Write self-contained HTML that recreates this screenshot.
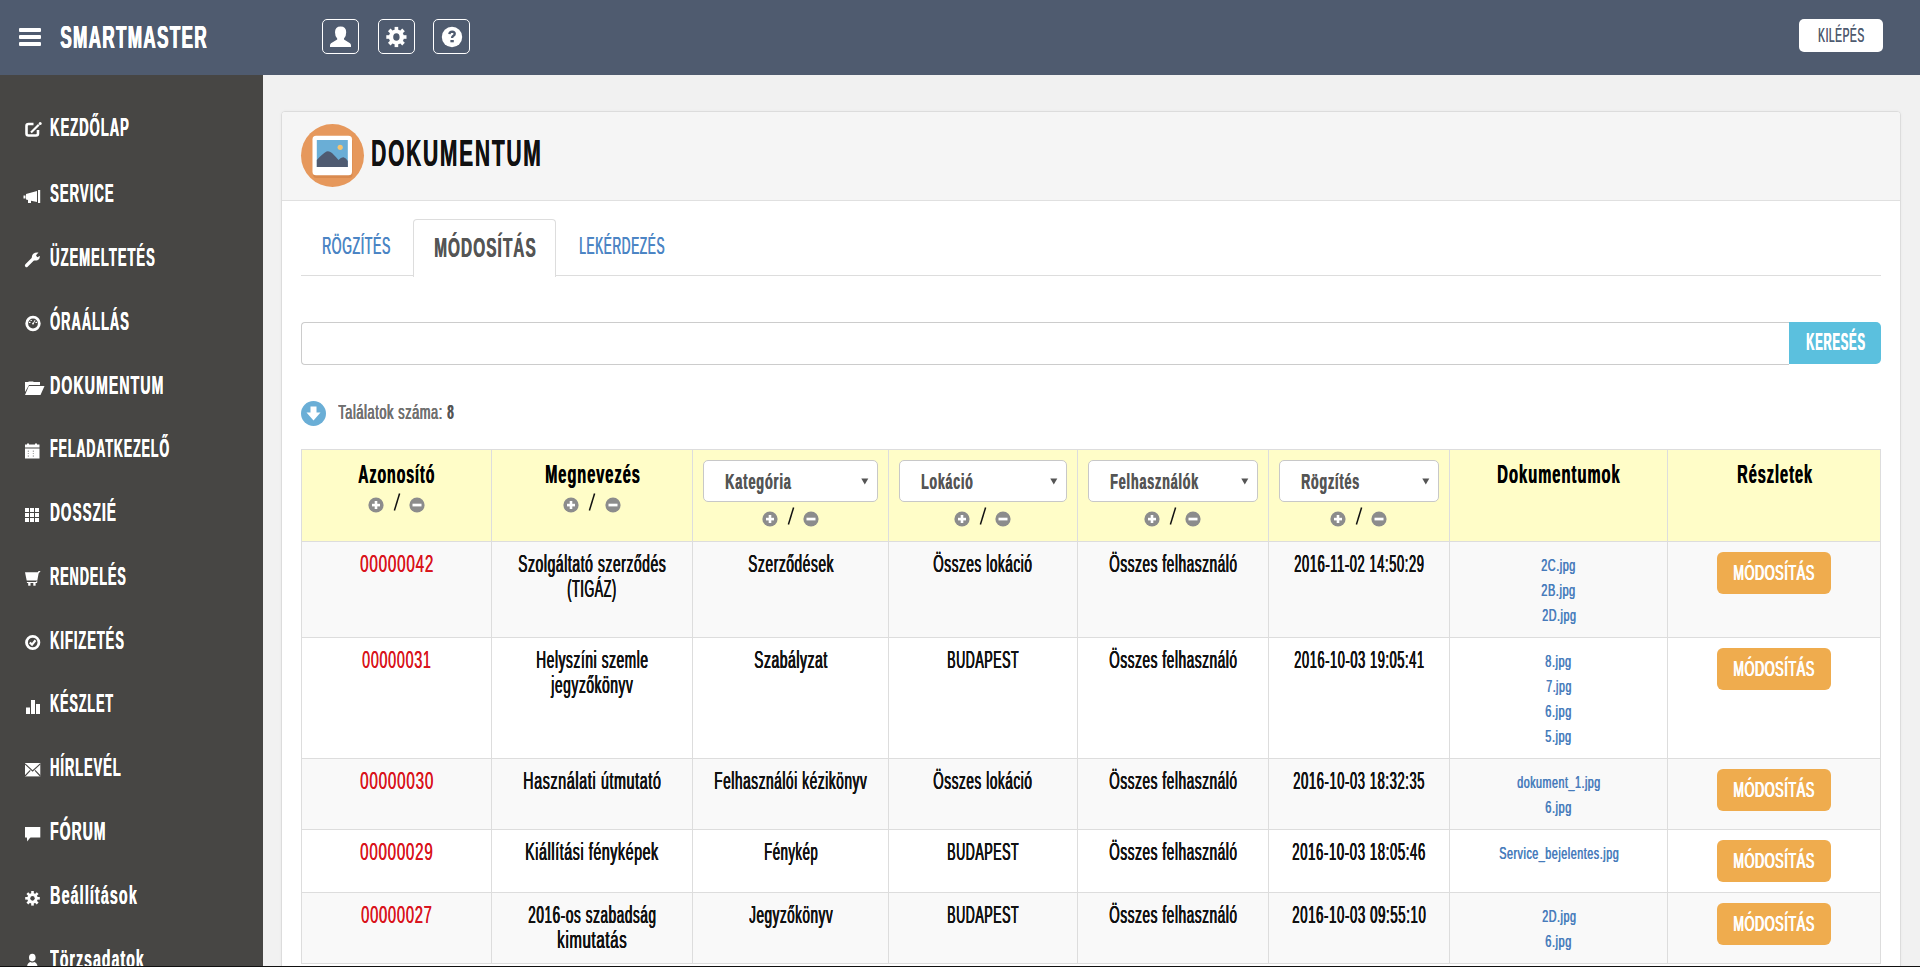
<!DOCTYPE html>
<html><head><meta charset="utf-8"><title>SmartMaster - Dokumentum</title>
<style>
html,body{margin:0;padding:0;}
body{width:1920px;height:967px;overflow:hidden;position:relative;background:#f1f1f1;font-family:"Liberation Sans",sans-serif;}
.r{position:absolute;box-sizing:content-box;}
.t{position:absolute;white-space:nowrap;transform-origin:0 0;font-family:"Liberation Sans",sans-serif;}
svg.r{overflow:visible}
</style></head><body>
<div class="r" style="left:0;top:0;width:1920px;height:75px;background:#4f5b6f"></div>
<div class="r" style="left:19px;top:28px;width:22px;height:4px;background:#fff;border-radius:1px"></div>
<div class="r" style="left:19px;top:35px;width:22px;height:4px;background:#fff;border-radius:1px"></div>
<div class="r" style="left:19px;top:42px;width:22px;height:4px;background:#fff;border-radius:1px"></div>
<span class="t" style="left:60.00px;top:20.93px;font-size:31.977px;line-height:31.977px;letter-spacing:2.558px;color:#fff;font-weight:bold;transform:scaleX(0.5334);text-shadow:0.66px 0 0 #fff,1.31px 0 0 #fff;">SMARTMASTER</span>
<div class="r" style="left:322px;top:19px;width:35px;height:33px;border:1px solid #fff;border-radius:5px"></div>
<div class="r" style="left:378px;top:19px;width:35px;height:33px;border:1px solid #fff;border-radius:5px"></div>
<div class="r" style="left:433px;top:19px;width:35px;height:33px;border:1px solid #fff;border-radius:5px"></div>
<svg class="r" style="left:322px;top:19px" width="37" height="35" viewBox="0 0 37 35"><path d="M13 13.2 Q13 7.6 18.6 7.6 Q24.2 7.6 24.2 13.2 Q24.2 17.5 22 19.6 L22 20.4 L28 24.2 Q29 25 29 26.5 L29 28.1 L8 28.1 L8 26.5 Q8 25 9 24.2 L15.2 20.4 L15.2 19.6 Q13 17.5 13 13.2 Z" fill="#fff"/></svg>
<svg class="r" style="left:378px;top:19px" width="37" height="35" viewBox="0 0 37 35"><circle cx="18.40" cy="18.00" r="7.60" fill="#fff"/><rect x="16.60" y="7.90" width="3.60" height="10.10" fill="#fff" transform="rotate(0.0 18.40 18.00)"/><rect x="16.60" y="7.90" width="3.60" height="10.10" fill="#fff" transform="rotate(45.0 18.40 18.00)"/><rect x="16.60" y="7.90" width="3.60" height="10.10" fill="#fff" transform="rotate(90.0 18.40 18.00)"/><rect x="16.60" y="7.90" width="3.60" height="10.10" fill="#fff" transform="rotate(135.0 18.40 18.00)"/><rect x="16.60" y="7.90" width="3.60" height="10.10" fill="#fff" transform="rotate(180.0 18.40 18.00)"/><rect x="16.60" y="7.90" width="3.60" height="10.10" fill="#fff" transform="rotate(225.0 18.40 18.00)"/><rect x="16.60" y="7.90" width="3.60" height="10.10" fill="#fff" transform="rotate(270.0 18.40 18.00)"/><rect x="16.60" y="7.90" width="3.60" height="10.10" fill="#fff" transform="rotate(315.0 18.40 18.00)"/><ellipse cx="18.40" cy="18.00" rx="3.20" ry="3.80" fill="#4f5b6f"/></svg>
<svg class="r" style="left:433px;top:19px" width="37" height="35" viewBox="0 0 37 35"><circle cx="19" cy="18" r="10.2" fill="#fff"/><path d="M16.4 15.2 Q16.6 12.6 19.2 12.6 Q21.7 12.7 21.7 14.8 Q21.6 16.2 20.1 17 Q19.1 17.6 19.1 19" fill="none" stroke="#4f5b6f" stroke-width="2.4"/><rect x="17.4" y="21" width="3.4" height="2.3" fill="#4f5b6f"/></svg>
<div class="r" style="left:1799px;top:19px;width:84px;height:33px;background:#fff;border-radius:5px"></div>
<span class="t" style="left:1817.60px;top:24.77px;font-size:20.349px;line-height:20.349px;letter-spacing:1.017px;color:#4f5b6f;font-weight:normal;transform:scaleX(0.5069);text-shadow:0.59px 0 0 #4f5b6f;">KILÉPÉS</span>
<div class="r" style="left:0;top:75px;width:263px;height:892px;background:#474644"></div>
<span class="t" style="left:50.00px;top:113.85px;font-size:26.163px;line-height:26.163px;letter-spacing:2.093px;color:#fff;font-weight:bold;transform:scaleX(0.4964);text-shadow:0.60px 0 0 #fff;">KEZDŐLAP</span>
<span class="t" style="left:50.00px;top:179.85px;font-size:26.163px;line-height:26.163px;letter-spacing:2.093px;color:#fff;font-weight:bold;transform:scaleX(0.5002);text-shadow:0.60px 0 0 #fff;">SERVICE</span>
<span class="t" style="left:50.00px;top:243.85px;font-size:26.163px;line-height:26.163px;letter-spacing:2.093px;color:#fff;font-weight:bold;transform:scaleX(0.4965);text-shadow:0.60px 0 0 #fff;">ÜZEMELTETÉS</span>
<span class="t" style="left:50.00px;top:307.85px;font-size:26.163px;line-height:26.163px;letter-spacing:2.093px;color:#fff;font-weight:bold;transform:scaleX(0.4919);text-shadow:0.61px 0 0 #fff;">ÓRAÁLLÁS</span>
<span class="t" style="left:50.00px;top:371.85px;font-size:26.163px;line-height:26.163px;letter-spacing:2.093px;color:#fff;font-weight:bold;transform:scaleX(0.5373);text-shadow:0.56px 0 0 #fff;">DOKUMENTUM</span>
<span class="t" style="left:50.00px;top:434.85px;font-size:26.163px;line-height:26.163px;letter-spacing:2.093px;color:#fff;font-weight:bold;transform:scaleX(0.4734);text-shadow:0.63px 0 0 #fff;">FELADATKEZELŐ</span>
<span class="t" style="left:50.00px;top:498.85px;font-size:26.163px;line-height:26.163px;letter-spacing:2.093px;color:#fff;font-weight:bold;transform:scaleX(0.5157);text-shadow:0.58px 0 0 #fff;">DOSSZIÉ</span>
<span class="t" style="left:50.00px;top:562.85px;font-size:26.163px;line-height:26.163px;letter-spacing:2.093px;color:#fff;font-weight:bold;transform:scaleX(0.4818);text-shadow:0.62px 0 0 #fff;">RENDELÉS</span>
<span class="t" style="left:50.00px;top:626.85px;font-size:26.163px;line-height:26.163px;letter-spacing:2.093px;color:#fff;font-weight:bold;transform:scaleX(0.4898);text-shadow:0.61px 0 0 #fff;">KIFIZETÉS</span>
<span class="t" style="left:50.00px;top:689.85px;font-size:26.163px;line-height:26.163px;letter-spacing:2.093px;color:#fff;font-weight:bold;transform:scaleX(0.4774);text-shadow:0.63px 0 0 #fff;">KÉSZLET</span>
<span class="t" style="left:50.00px;top:753.85px;font-size:26.163px;line-height:26.163px;letter-spacing:2.093px;color:#fff;font-weight:bold;transform:scaleX(0.4895);text-shadow:0.61px 0 0 #fff;">HÍRLEVÉL</span>
<span class="t" style="left:50.00px;top:817.85px;font-size:26.163px;line-height:26.163px;letter-spacing:2.093px;color:#fff;font-weight:bold;transform:scaleX(0.5303);text-shadow:0.57px 0 0 #fff;">FÓRUM</span>
<span class="t" style="left:50.00px;top:881.85px;font-size:26.163px;line-height:26.163px;letter-spacing:2.093px;color:#fff;font-weight:bold;transform:scaleX(0.5443);text-shadow:0.55px 0 0 #fff;">Beállítások</span>
<span class="t" style="left:50.00px;top:945.85px;font-size:26.163px;line-height:26.163px;letter-spacing:2.093px;color:#fff;font-weight:bold;transform:scaleX(0.5346);text-shadow:0.56px 0 0 #fff;">Törzsadatok</span>
<svg class="r" style="left:24px;top:121px" width="18" height="17" viewBox="0 0 18 17"><path d="M9.5 3 H4.5 Q2.5 3 2.5 5 V12.5 Q2.5 14.5 4.5 14.5 H12 Q14 14.5 14 12.5 V9" fill="none" stroke="#fff" stroke-width="2.6"/><path d="M7 11.5 L14.8 3.8" stroke="#fff" stroke-width="2.2"/><circle cx="16.2" cy="2.6" r="1.5" fill="#fff"/></svg>
<svg class="r" style="left:23px;top:189px" width="19" height="16" viewBox="0 0 19 16"><path d="M3 5 L14 2 V13 L8 11.8 V14 H5 V11 L3 10.6 Z" fill="#fff"/><rect x="15" y="1" width="2.2" height="13" fill="#fff"/><rect x="0.5" y="6.5" width="2" height="3" fill="#fff"/></svg>
<svg class="r" style="left:24px;top:251px" width="18" height="17" viewBox="0 0 18 17"><path d="M2.5 14.5 L9.5 7.5" stroke="#fff" stroke-width="3.2" stroke-linecap="round"/><path d="M8 8 Q7 3.5 11 1.8 Q13 1.2 14.5 1.6 L12 4.2 L13.2 6.2 L15.8 5 Q16.2 7.8 13.5 9.2 Q11 10 9.5 9.2 Z" fill="#fff"/></svg>
<svg class="r" style="left:24px;top:315px" width="18" height="17" viewBox="0 0 18 17"><circle cx="9" cy="8.5" r="6.3" fill="none" stroke="#fff" stroke-width="2.8"/><rect x="5" y="6.8" width="1.5" height="1.2" fill="#fff"/><rect x="11.5" y="6.8" width="1.5" height="1.2" fill="#fff"/><rect x="8.2" y="7.8" width="1.6" height="1.6" fill="#fff"/><rect x="6.5" y="5" width="1.3" height="1" fill="#fff"/><path d="M9 9 L11 5.2" stroke="#fff" stroke-width="1"/></svg>
<svg class="r" style="left:24px;top:380px" width="21" height="17" viewBox="0 0 21 17"><path d="M1 2 H4 L5 1.5 H9 L9.8 2 H16 V5 H5 L1 12 Z" fill="#fff"/><path d="M4.8 6 H20.5 L16.5 15 H1 Z" fill="#fff"/></svg>
<svg class="r" style="left:24px;top:443px" width="17" height="17" viewBox="0 0 17 17"><rect x="1" y="1.5" width="14.5" height="3" fill="#fff"/><rect x="3" y="0.5" width="2" height="2" fill="#fff"/><rect x="11" y="0.5" width="2" height="2" fill="#fff"/><rect x="1" y="5.5" width="14.5" height="10" fill="#fff"/><g fill="#999"><rect x="3.8" y="7.5" width="1" height="1.5"/><rect x="8.8" y="7.5" width="1" height="1.5"/><rect x="3.8" y="10" width="1" height="1"/><rect x="8.8" y="10" width="1" height="1"/><rect x="3.8" y="12.3" width="1" height="1.5"/><rect x="8.8" y="12.3" width="1" height="1.5"/></g></svg>
<svg class="r" style="left:24px;top:507px" width="17" height="17" viewBox="0 0 17 17"><g fill="#fff"><rect x="1.0" y="1.0" width="4" height="4"/><rect x="1.0" y="6.0" width="4" height="4"/><rect x="1.0" y="11.0" width="4" height="4"/><rect x="6.0" y="1.0" width="4" height="4"/><rect x="6.0" y="6.0" width="4" height="4"/><rect x="6.0" y="11.0" width="4" height="4"/><rect x="11.0" y="1.0" width="4" height="4"/><rect x="11.0" y="6.0" width="4" height="4"/><rect x="11.0" y="11.0" width="4" height="4"/></g></svg>
<svg class="r" style="left:24px;top:570px" width="18" height="17" viewBox="0 0 18 17"><g fill="#fff"><path d="M1 2.2 H13.8 L14.6 0.9 H16.6 L14.6 3.4 L13.3 10.6 H2.7 Z"/><path d="M13.3 10.4 L13.1 13 H2.9 V11.9 H12 Z"/><rect x="4.2" y="13" width="2.3" height="2.7"/><rect x="9.3" y="13" width="2.3" height="2.7"/></g></svg>
<svg class="r" style="left:24px;top:634px" width="18" height="17" viewBox="0 0 18 17"><circle cx="8.7" cy="8.5" r="6.2" fill="none" stroke="#fff" stroke-width="2.8"/><path d="M5.8 8.5 L8 10.6 L11.5 6.3" fill="none" stroke="#fff" stroke-width="2.2"/></svg>
<svg class="r" style="left:25px;top:699px" width="17" height="17" viewBox="0 0 17 17"><g fill="#fff"><rect x="1" y="8.5" width="4" height="6.5"/><rect x="6" y="1" width="4" height="14"/><rect x="11" y="5" width="4" height="10"/></g></svg>
<svg class="r" style="left:24px;top:762px" width="17" height="16" viewBox="0 0 17 16"><rect x="1" y="1" width="15.3" height="13.4" fill="#fff"/><path d="M1 1.8 L8.6 9 L16.3 1.8 M1 14 L6.3 8.4 M16.3 14 L11 8.4" fill="none" stroke="#474644" stroke-width="1.1"/></svg>
<svg class="r" style="left:24px;top:826px" width="17" height="17" viewBox="0 0 17 17"><rect x="1" y="1" width="15.3" height="10.5" fill="#fff"/><path d="M2.8 11 H6.6 L3.3 15.5 Z" fill="#fff"/></svg>
<svg class="r" style="left:24px;top:890px" width="17" height="17" viewBox="0 0 17 17"><circle cx="8.50" cy="8.30" r="5.20" fill="#fff"/><rect x="7.20" y="1.00" width="2.60" height="7.30" fill="#fff" transform="rotate(0.0 8.50 8.30)"/><rect x="7.20" y="1.00" width="2.60" height="7.30" fill="#fff" transform="rotate(45.0 8.50 8.30)"/><rect x="7.20" y="1.00" width="2.60" height="7.30" fill="#fff" transform="rotate(90.0 8.50 8.30)"/><rect x="7.20" y="1.00" width="2.60" height="7.30" fill="#fff" transform="rotate(135.0 8.50 8.30)"/><rect x="7.20" y="1.00" width="2.60" height="7.30" fill="#fff" transform="rotate(180.0 8.50 8.30)"/><rect x="7.20" y="1.00" width="2.60" height="7.30" fill="#fff" transform="rotate(225.0 8.50 8.30)"/><rect x="7.20" y="1.00" width="2.60" height="7.30" fill="#fff" transform="rotate(270.0 8.50 8.30)"/><rect x="7.20" y="1.00" width="2.60" height="7.30" fill="#fff" transform="rotate(315.0 8.50 8.30)"/><ellipse cx="8.50" cy="8.30" rx="2.20" ry="2.40" fill="#474644"/></svg>
<svg class="r" style="left:26px;top:953px" width="13" height="14" viewBox="0 0 13 14"><ellipse cx="6.3" cy="4.6" rx="3.3" ry="3.8" fill="#fff"/><path d="M1 13.5 Q1.5 9.5 4.5 9 Q6.3 10.2 8.1 9 Q11 9.5 11.6 13.5 Z" fill="#fff"/></svg>
<div class="r" style="left:263px;top:75px;width:1657px;height:892px;background:#f1f1f1"></div>
<div class="r" style="left:281px;top:111px;width:1618px;height:900px;background:#fff;border:1px solid #dcdcdc;border-radius:4px;box-shadow:0 0 3px rgba(0,0,0,0.04)"></div>
<div class="r" style="left:282px;top:112px;width:1618px;height:88px;background:#f5f5f5;border-radius:3px 3px 0 0"></div>
<div class="r" style="left:282px;top:200px;width:1618px;height:1px;background:#e0e0e0"></div>
<svg class="r" style="left:300px;top:123px" width="66" height="66" viewBox="0 0 66 66"><circle cx="32.5" cy="32.5" r="31.5" fill="#e6985c"/><rect x="13" y="15.5" width="39.5" height="39.5" rx="3.5" fill="#d98a4f"/><rect x="12.5" y="12.8" width="39.5" height="39.5" rx="3.5" fill="#fff"/><rect x="16.8" y="17" width="31" height="27" fill="#6aaed6"/><path d="M16.8 37 Q22 31 26.5 28.5 Q29 27.5 32 30 Q36 34 38.5 37 Q41 34 43.5 34.2 Q46 34.8 47.8 38 V44 H16.8 Z" fill="#4f5b71"/><circle cx="40.2" cy="24.3" r="2.6" fill="#f6c46f"/></svg>
<span class="t" style="left:371.00px;top:135.13px;font-size:37.064px;line-height:37.064px;letter-spacing:2.965px;color:#111;font-weight:bold;transform:scaleX(0.5686);text-shadow:0.53px 0 0 #111;">DOKUMENTUM</span>
<div class="r" style="left:301px;top:275px;width:1580px;height:1px;background:#ddd"></div>
<div class="r" style="left:413px;top:219px;width:141px;height:57px;background:#fff;border:1px solid #ddd;border-bottom:none;border-radius:4px 4px 0 0"></div>
<span class="t" style="left:321.70px;top:233.68px;font-size:24.709px;line-height:24.709px;letter-spacing:1.235px;color:#4a84c4;font-weight:normal;transform:scaleX(0.5046);text-shadow:0.99px 0 0 #4a84c4;">RÖGZÍTÉS</span>
<span class="t" style="left:433.90px;top:234.42px;font-size:27.616px;line-height:27.616px;letter-spacing:1.933px;color:#555;font-weight:bold;transform:scaleX(0.5556);text-shadow:0.90px 0 0 #555;">MÓDOSÍTÁS</span>
<span class="t" style="left:578.80px;top:233.68px;font-size:24.709px;line-height:24.709px;letter-spacing:1.235px;color:#4a84c4;font-weight:normal;transform:scaleX(0.4887);text-shadow:1.02px 0 0 #4a84c4;">LEKÉRDEZÉS</span>
<div class="r" style="left:301px;top:322px;width:1487px;height:41px;background:#fff;border:1px solid #ccc;border-right:none;border-radius:4px 0 0 4px"></div>
<div class="r" style="left:1789px;top:322px;width:92px;height:42px;background:#5bc0de;border-radius:0 5px 5px 0"></div>
<span class="t" style="left:1805.90px;top:330.08px;font-size:24.709px;line-height:24.709px;letter-spacing:1.730px;color:#fff;font-weight:bold;transform:scaleX(0.4569);text-shadow:1.09px 0 0 #fff;">KERESÉS</span>
<svg class="r" style="left:300px;top:400px" width="27" height="27" viewBox="0 0 27 27"><circle cx="13.5" cy="13.5" r="12.5" fill="#6aaed6"/><path d="M10.5 6.5 H16.5 V12.5 H20.5 L13.5 20.5 L6.5 12.5 H10.5 Z" fill="#fff"/></svg>
<span class="t" style="left:338.40px;top:401.82px;font-size:20.058px;line-height:20.058px;letter-spacing:1.003px;color:#707070;font-weight:normal;transform:scaleX(0.6325);text-shadow:0.47px 0 0 #707070,0.95px 0 0 #707070;">Találatok száma:</span>
<span class="t" style="left:447.00px;top:401.82px;font-size:20.058px;line-height:20.058px;letter-spacing:1.404px;color:#555;font-weight:bold;transform:scaleX(0.5828);text-shadow:0.86px 0 0 #555;">8</span>
<div class="r" style="left:301px;top:449px;width:1580px;height:92px;background:#fffdc8"></div>
<div class="r" style="left:301px;top:541px;width:1580px;height:96px;background:#f9f9f9"></div>
<div class="r" style="left:301px;top:637px;width:1580px;height:121px;background:#fff"></div>
<div class="r" style="left:301px;top:758px;width:1580px;height:71px;background:#f9f9f9"></div>
<div class="r" style="left:301px;top:829px;width:1580px;height:63px;background:#fff"></div>
<div class="r" style="left:301px;top:892px;width:1580px;height:71px;background:#f9f9f9"></div>
<div class="r" style="left:301px;top:449px;width:1580px;height:1px;background:#dddddd"></div>
<div class="r" style="left:301px;top:541px;width:1580px;height:1px;background:#dddddd"></div>
<div class="r" style="left:301px;top:637px;width:1580px;height:1px;background:#dddddd"></div>
<div class="r" style="left:301px;top:758px;width:1580px;height:1px;background:#dddddd"></div>
<div class="r" style="left:301px;top:829px;width:1580px;height:1px;background:#dddddd"></div>
<div class="r" style="left:301px;top:892px;width:1580px;height:1px;background:#dddddd"></div>
<div class="r" style="left:301px;top:963px;width:1580px;height:1px;background:#dddddd"></div>
<div class="r" style="left:301px;top:449px;width:1px;height:515px;background:#dddddd"></div>
<div class="r" style="left:491px;top:449px;width:1px;height:515px;background:#dddddd"></div>
<div class="r" style="left:692px;top:449px;width:1px;height:515px;background:#dddddd"></div>
<div class="r" style="left:888px;top:449px;width:1px;height:515px;background:#dddddd"></div>
<div class="r" style="left:1077px;top:449px;width:1px;height:515px;background:#dddddd"></div>
<div class="r" style="left:1268px;top:449px;width:1px;height:515px;background:#dddddd"></div>
<div class="r" style="left:1449px;top:449px;width:1px;height:515px;background:#dddddd"></div>
<div class="r" style="left:1667px;top:449px;width:1px;height:515px;background:#dddddd"></div>
<div class="r" style="left:1880px;top:449px;width:1px;height:515px;background:#dddddd"></div>
<span class="t" style="left:358.20px;top:460.85px;font-size:26.163px;line-height:26.163px;letter-spacing:1.831px;color:#000;font-weight:bold;transform:scaleX(0.5394);text-shadow:0.93px 0 0 #000;">Azonosító</span>
<svg class="r" style="left:368.0px;top:496.8px" width="16" height="16" viewBox="0 0 16 16"><circle cx="8" cy="8" r="7.6" fill="#8c8c8c"/><rect x="4" y="6.8" width="8" height="2.6" fill="#fff"/><rect x="6.7" y="4" width="2.6" height="8" fill="#fff"/></svg><svg class="r" style="left:409.0px;top:496.8px" width="16" height="16" viewBox="0 0 16 16"><circle cx="8" cy="8" r="7.6" fill="#8c8c8c"/><rect x="3.5" y="6.7" width="9" height="2.7" fill="#fff"/></svg><svg class="r" style="left:392.0px;top:491.8px" width="10" height="20" viewBox="0 0 10 20"><path d="M7.6 1.5 L2.4 18.5" stroke="#111" stroke-width="1.5"/></svg>
<span class="t" style="left:544.90px;top:460.85px;font-size:26.163px;line-height:26.163px;letter-spacing:1.831px;color:#000;font-weight:bold;transform:scaleX(0.5544);text-shadow:0.90px 0 0 #000;">Megnevezés</span>
<svg class="r" style="left:563.4px;top:496.8px" width="16" height="16" viewBox="0 0 16 16"><circle cx="8" cy="8" r="7.6" fill="#8c8c8c"/><rect x="4" y="6.8" width="8" height="2.6" fill="#fff"/><rect x="6.7" y="4" width="2.6" height="8" fill="#fff"/></svg><svg class="r" style="left:604.5px;top:496.8px" width="16" height="16" viewBox="0 0 16 16"><circle cx="8" cy="8" r="7.6" fill="#8c8c8c"/><rect x="3.5" y="6.7" width="9" height="2.7" fill="#fff"/></svg><svg class="r" style="left:587.3px;top:491.8px" width="10" height="20" viewBox="0 0 10 20"><path d="M7.6 1.5 L2.4 18.5" stroke="#111" stroke-width="1.5"/></svg>
<span class="t" style="left:1497.30px;top:461.52px;font-size:25.727px;line-height:25.727px;letter-spacing:1.801px;color:#000;font-weight:bold;transform:scaleX(0.5723);text-shadow:0.87px 0 0 #000;">Dokumentumok</span>
<span class="t" style="left:1736.70px;top:461.52px;font-size:25.727px;line-height:25.727px;letter-spacing:1.801px;color:#000;font-weight:bold;transform:scaleX(0.5626);text-shadow:0.89px 0 0 #000;">Részletek</span>
<div class="r" style="left:703px;top:460px;width:173px;height:40px;background:#fff;border:1px solid #c8c8c8;border-radius:5px"></div>
<span class="t" style="left:724.70px;top:470.78px;font-size:22.238px;line-height:22.238px;letter-spacing:1.557px;color:#555;font-weight:bold;transform:scaleX(0.5714);text-shadow:0.88px 0 0 #555;">Kategória</span>
<svg class="r" style="left:860.5px;top:478px" width="8" height="7" viewBox="0 0 8 7"><path d="M0.3 0.5 H7.3 L3.8 6.5 Z" fill="#555"/></svg>
<svg class="r" style="left:761.5px;top:511.0px" width="16" height="16" viewBox="0 0 16 16"><circle cx="8" cy="8" r="7.6" fill="#8c8c8c"/><rect x="4" y="6.8" width="8" height="2.6" fill="#fff"/><rect x="6.7" y="4" width="2.6" height="8" fill="#fff"/></svg><svg class="r" style="left:802.7px;top:511.0px" width="16" height="16" viewBox="0 0 16 16"><circle cx="8" cy="8" r="7.6" fill="#8c8c8c"/><rect x="3.5" y="6.7" width="9" height="2.7" fill="#fff"/></svg><svg class="r" style="left:785.5px;top:506.0px" width="10" height="20" viewBox="0 0 10 20"><path d="M7.6 1.5 L2.4 18.5" stroke="#111" stroke-width="1.5"/></svg>
<div class="r" style="left:899px;top:460px;width:166px;height:40px;background:#fff;border:1px solid #c8c8c8;border-radius:5px"></div>
<span class="t" style="left:920.70px;top:470.78px;font-size:22.238px;line-height:22.238px;letter-spacing:1.557px;color:#555;font-weight:bold;transform:scaleX(0.5515);text-shadow:0.91px 0 0 #555;">Lokáció</span>
<svg class="r" style="left:1049.5px;top:478px" width="8" height="7" viewBox="0 0 8 7"><path d="M0.3 0.5 H7.3 L3.8 6.5 Z" fill="#555"/></svg>
<svg class="r" style="left:954.0px;top:511.0px" width="16" height="16" viewBox="0 0 16 16"><circle cx="8" cy="8" r="7.6" fill="#8c8c8c"/><rect x="4" y="6.8" width="8" height="2.6" fill="#fff"/><rect x="6.7" y="4" width="2.6" height="8" fill="#fff"/></svg><svg class="r" style="left:995.2px;top:511.0px" width="16" height="16" viewBox="0 0 16 16"><circle cx="8" cy="8" r="7.6" fill="#8c8c8c"/><rect x="3.5" y="6.7" width="9" height="2.7" fill="#fff"/></svg><svg class="r" style="left:978.0px;top:506.0px" width="10" height="20" viewBox="0 0 10 20"><path d="M7.6 1.5 L2.4 18.5" stroke="#111" stroke-width="1.5"/></svg>
<div class="r" style="left:1088px;top:460px;width:168px;height:40px;background:#fff;border:1px solid #c8c8c8;border-radius:5px"></div>
<span class="t" style="left:1109.70px;top:470.78px;font-size:22.238px;line-height:22.238px;letter-spacing:1.557px;color:#555;font-weight:bold;transform:scaleX(0.5619);text-shadow:0.89px 0 0 #555;">Felhasználók</span>
<svg class="r" style="left:1240.5px;top:478px" width="8" height="7" viewBox="0 0 8 7"><path d="M0.3 0.5 H7.3 L3.8 6.5 Z" fill="#555"/></svg>
<svg class="r" style="left:1144.0px;top:511.0px" width="16" height="16" viewBox="0 0 16 16"><circle cx="8" cy="8" r="7.6" fill="#8c8c8c"/><rect x="4" y="6.8" width="8" height="2.6" fill="#fff"/><rect x="6.7" y="4" width="2.6" height="8" fill="#fff"/></svg><svg class="r" style="left:1185.2px;top:511.0px" width="16" height="16" viewBox="0 0 16 16"><circle cx="8" cy="8" r="7.6" fill="#8c8c8c"/><rect x="3.5" y="6.7" width="9" height="2.7" fill="#fff"/></svg><svg class="r" style="left:1168.0px;top:506.0px" width="10" height="20" viewBox="0 0 10 20"><path d="M7.6 1.5 L2.4 18.5" stroke="#111" stroke-width="1.5"/></svg>
<div class="r" style="left:1279px;top:460px;width:158px;height:40px;background:#fff;border:1px solid #c8c8c8;border-radius:5px"></div>
<span class="t" style="left:1300.70px;top:470.78px;font-size:22.238px;line-height:22.238px;letter-spacing:1.557px;color:#555;font-weight:bold;transform:scaleX(0.5591);text-shadow:0.89px 0 0 #555;">Rögzítés</span>
<svg class="r" style="left:1421.5px;top:478px" width="8" height="7" viewBox="0 0 8 7"><path d="M0.3 0.5 H7.3 L3.8 6.5 Z" fill="#555"/></svg>
<svg class="r" style="left:1330.0px;top:511.0px" width="16" height="16" viewBox="0 0 16 16"><circle cx="8" cy="8" r="7.6" fill="#8c8c8c"/><rect x="4" y="6.8" width="8" height="2.6" fill="#fff"/><rect x="6.7" y="4" width="2.6" height="8" fill="#fff"/></svg><svg class="r" style="left:1371.2px;top:511.0px" width="16" height="16" viewBox="0 0 16 16"><circle cx="8" cy="8" r="7.6" fill="#8c8c8c"/><rect x="3.5" y="6.7" width="9" height="2.7" fill="#fff"/></svg><svg class="r" style="left:1354.0px;top:506.0px" width="10" height="20" viewBox="0 0 10 20"><path d="M7.6 1.5 L2.4 18.5" stroke="#111" stroke-width="1.5"/></svg>
<span class="t" style="left:359.75px;top:551.80px;font-size:23.983px;line-height:23.983px;letter-spacing:1.199px;color:#d9141c;font-weight:normal;transform:scaleX(0.6359);text-shadow:0.47px 0 0 #d9141c;">00000042</span>
<span class="t" style="left:517.95px;top:551.80px;font-size:23.983px;line-height:23.983px;letter-spacing:1.199px;color:#111;font-weight:normal;transform:scaleX(0.5703);text-shadow:0.53px 0 0 #111,1.05px 0 0 #111;">Szolgáltató szerződés</span>
<span class="t" style="left:567.25px;top:576.80px;font-size:23.983px;line-height:23.983px;letter-spacing:1.199px;color:#111;font-weight:normal;transform:scaleX(0.5214);text-shadow:0.58px 0 0 #111,1.15px 0 0 #111;">(TIGÁZ)</span>
<span class="t" style="left:747.60px;top:551.80px;font-size:23.983px;line-height:23.983px;letter-spacing:1.199px;color:#111;font-weight:normal;transform:scaleX(0.5655);text-shadow:0.53px 0 0 #111,1.06px 0 0 #111;">Szerződések</span>
<span class="t" style="left:933.40px;top:551.80px;font-size:23.983px;line-height:23.983px;letter-spacing:1.199px;color:#111;font-weight:normal;transform:scaleX(0.5575);text-shadow:0.54px 0 0 #111,1.08px 0 0 #111;">Összes lokáció</span>
<span class="t" style="left:1108.85px;top:551.80px;font-size:23.983px;line-height:23.983px;letter-spacing:1.199px;color:#111;font-weight:normal;transform:scaleX(0.5593);text-shadow:0.54px 0 0 #111,1.07px 0 0 #111;">Összes felhasználó</span>
<span class="t" style="left:1293.85px;top:551.80px;font-size:23.983px;line-height:23.983px;letter-spacing:1.199px;color:#111;font-weight:normal;transform:scaleX(0.5348);text-shadow:0.56px 0 0 #111,1.12px 0 0 #111;">2016-11-02 14:50:29</span>
<span class="t" style="left:1541.35px;top:558.13px;font-size:16.860px;line-height:16.860px;letter-spacing:0.843px;color:#467bbb;font-weight:normal;transform:scaleX(0.6421);text-shadow:0.78px 0 0 #467bbb;">2C.jpg</span>
<span class="t" style="left:1541.35px;top:583.13px;font-size:16.860px;line-height:16.860px;letter-spacing:0.843px;color:#467bbb;font-weight:normal;transform:scaleX(0.6536);text-shadow:0.77px 0 0 #467bbb;">2B.jpg</span>
<span class="t" style="left:1541.55px;top:608.13px;font-size:16.860px;line-height:16.860px;letter-spacing:0.843px;color:#467bbb;font-weight:normal;transform:scaleX(0.6346);text-shadow:0.79px 0 0 #467bbb;">2D.jpg</span>
<div class="r" style="left:1717px;top:552px;width:114px;height:42px;background:#efac4e;border-radius:6px"></div>
<span class="t" style="left:1733.30px;top:561.80px;font-size:22.093px;line-height:22.093px;letter-spacing:1.105px;color:#fff;font-weight:normal;transform:scaleX(0.5721);text-shadow:0.70px 0 0 #fff,1.40px 0 0 #fff;">MÓDOSÍTÁS</span>
<span class="t" style="left:361.95px;top:647.80px;font-size:23.983px;line-height:23.983px;letter-spacing:1.199px;color:#d9141c;font-weight:normal;transform:scaleX(0.5977);text-shadow:0.50px 0 0 #d9141c;">00000031</span>
<span class="t" style="left:535.85px;top:647.80px;font-size:23.983px;line-height:23.983px;letter-spacing:1.199px;color:#111;font-weight:normal;transform:scaleX(0.5644);text-shadow:0.53px 0 0 #111,1.06px 0 0 #111;">Helyszíni szemle</span>
<span class="t" style="left:551.08px;top:672.80px;font-size:23.983px;line-height:23.983px;letter-spacing:1.199px;color:#111;font-weight:normal;transform:scaleX(0.5666);text-shadow:0.53px 0 0 #111,1.06px 0 0 #111;">jegyzőkönyv</span>
<span class="t" style="left:753.75px;top:647.80px;font-size:23.983px;line-height:23.983px;letter-spacing:1.199px;color:#111;font-weight:normal;transform:scaleX(0.5691);text-shadow:0.53px 0 0 #111,1.05px 0 0 #111;">Szabályzat</span>
<span class="t" style="left:947.00px;top:647.80px;font-size:23.983px;line-height:23.983px;letter-spacing:1.199px;color:#111;font-weight:normal;transform:scaleX(0.5187);text-shadow:0.58px 0 0 #111,1.16px 0 0 #111;">BUDAPEST</span>
<span class="t" style="left:1108.85px;top:647.80px;font-size:23.983px;line-height:23.983px;letter-spacing:1.199px;color:#111;font-weight:normal;transform:scaleX(0.5593);text-shadow:0.54px 0 0 #111,1.07px 0 0 #111;">Összes felhasználó</span>
<span class="t" style="left:1293.80px;top:647.80px;font-size:23.983px;line-height:23.983px;letter-spacing:1.199px;color:#111;font-weight:normal;transform:scaleX(0.5314);text-shadow:0.56px 0 0 #111,1.13px 0 0 #111;">2016-10-03 19:05:41</span>
<span class="t" style="left:1545.40px;top:654.13px;font-size:16.860px;line-height:16.860px;letter-spacing:0.843px;color:#467bbb;font-weight:normal;transform:scaleX(0.6486);text-shadow:0.77px 0 0 #467bbb;">8.jpg</span>
<span class="t" style="left:1545.85px;top:679.13px;font-size:16.860px;line-height:16.860px;letter-spacing:0.843px;color:#467bbb;font-weight:normal;transform:scaleX(0.6260);text-shadow:0.80px 0 0 #467bbb;">7.jpg</span>
<span class="t" style="left:1545.35px;top:704.13px;font-size:16.860px;line-height:16.860px;letter-spacing:0.843px;color:#467bbb;font-weight:normal;transform:scaleX(0.6511);text-shadow:0.77px 0 0 #467bbb;">6.jpg</span>
<span class="t" style="left:1545.40px;top:729.13px;font-size:16.860px;line-height:16.860px;letter-spacing:0.843px;color:#467bbb;font-weight:normal;transform:scaleX(0.6486);text-shadow:0.77px 0 0 #467bbb;">5.jpg</span>
<div class="r" style="left:1717px;top:648px;width:114px;height:42px;background:#efac4e;border-radius:6px"></div>
<span class="t" style="left:1733.30px;top:657.80px;font-size:22.093px;line-height:22.093px;letter-spacing:1.105px;color:#fff;font-weight:normal;transform:scaleX(0.5721);text-shadow:0.70px 0 0 #fff,1.40px 0 0 #fff;">MÓDOSÍTÁS</span>
<span class="t" style="left:359.75px;top:768.80px;font-size:23.983px;line-height:23.983px;letter-spacing:1.199px;color:#d9141c;font-weight:normal;transform:scaleX(0.6359);text-shadow:0.47px 0 0 #d9141c;">00000030</span>
<span class="t" style="left:522.90px;top:768.80px;font-size:23.983px;line-height:23.983px;letter-spacing:1.199px;color:#111;font-weight:normal;transform:scaleX(0.5892);text-shadow:0.51px 0 0 #111,1.02px 0 0 #111;">Használati útmutató</span>
<span class="t" style="left:713.95px;top:768.80px;font-size:23.983px;line-height:23.983px;letter-spacing:1.199px;color:#111;font-weight:normal;transform:scaleX(0.5611);text-shadow:0.53px 0 0 #111,1.07px 0 0 #111;">Felhasználói kézikönyv</span>
<span class="t" style="left:933.40px;top:768.80px;font-size:23.983px;line-height:23.983px;letter-spacing:1.199px;color:#111;font-weight:normal;transform:scaleX(0.5575);text-shadow:0.54px 0 0 #111,1.08px 0 0 #111;">Összes lokáció</span>
<span class="t" style="left:1108.85px;top:768.80px;font-size:23.983px;line-height:23.983px;letter-spacing:1.199px;color:#111;font-weight:normal;transform:scaleX(0.5593);text-shadow:0.54px 0 0 #111,1.07px 0 0 #111;">Összes felhasználó</span>
<span class="t" style="left:1293.10px;top:768.80px;font-size:23.983px;line-height:23.983px;letter-spacing:1.199px;color:#111;font-weight:normal;transform:scaleX(0.5371);text-shadow:0.56px 0 0 #111,1.12px 0 0 #111;">2016-10-03 18:32:35</span>
<span class="t" style="left:1516.85px;top:775.13px;font-size:16.860px;line-height:16.860px;letter-spacing:0.843px;color:#467bbb;font-weight:normal;transform:scaleX(0.6338);text-shadow:0.79px 0 0 #467bbb;">dokument_1.jpg</span>
<span class="t" style="left:1545.35px;top:800.13px;font-size:16.860px;line-height:16.860px;letter-spacing:0.843px;color:#467bbb;font-weight:normal;transform:scaleX(0.6511);text-shadow:0.77px 0 0 #467bbb;">6.jpg</span>
<div class="r" style="left:1717px;top:769px;width:114px;height:42px;background:#efac4e;border-radius:6px"></div>
<span class="t" style="left:1733.30px;top:778.80px;font-size:22.093px;line-height:22.093px;letter-spacing:1.105px;color:#fff;font-weight:normal;transform:scaleX(0.5721);text-shadow:0.70px 0 0 #fff,1.40px 0 0 #fff;">MÓDOSÍTÁS</span>
<span class="t" style="left:360.05px;top:839.80px;font-size:23.983px;line-height:23.983px;letter-spacing:1.199px;color:#d9141c;font-weight:normal;transform:scaleX(0.6307);text-shadow:0.48px 0 0 #d9141c;">00000029</span>
<span class="t" style="left:525.25px;top:839.80px;font-size:23.983px;line-height:23.983px;letter-spacing:1.199px;color:#111;font-weight:normal;transform:scaleX(0.5826);text-shadow:0.51px 0 0 #111,1.03px 0 0 #111;">Kiállítási fényképek</span>
<span class="t" style="left:763.50px;top:839.80px;font-size:23.983px;line-height:23.983px;letter-spacing:1.199px;color:#111;font-weight:normal;transform:scaleX(0.5384);text-shadow:0.56px 0 0 #111,1.11px 0 0 #111;">Fénykép</span>
<span class="t" style="left:947.00px;top:839.80px;font-size:23.983px;line-height:23.983px;letter-spacing:1.199px;color:#111;font-weight:normal;transform:scaleX(0.5187);text-shadow:0.58px 0 0 #111,1.16px 0 0 #111;">BUDAPEST</span>
<span class="t" style="left:1108.85px;top:839.80px;font-size:23.983px;line-height:23.983px;letter-spacing:1.199px;color:#111;font-weight:normal;transform:scaleX(0.5593);text-shadow:0.54px 0 0 #111,1.07px 0 0 #111;">Összes felhasználó</span>
<span class="t" style="left:1292.20px;top:839.80px;font-size:23.983px;line-height:23.983px;letter-spacing:1.199px;color:#111;font-weight:normal;transform:scaleX(0.5445);text-shadow:0.55px 0 0 #111,1.10px 0 0 #111;">2016-10-03 18:05:46</span>
<span class="t" style="left:1498.65px;top:846.13px;font-size:16.860px;line-height:16.860px;letter-spacing:0.843px;color:#467bbb;font-weight:normal;transform:scaleX(0.6373);text-shadow:0.78px 0 0 #467bbb;">Service_bejelentes.jpg</span>
<div class="r" style="left:1717px;top:840px;width:114px;height:42px;background:#efac4e;border-radius:6px"></div>
<span class="t" style="left:1733.30px;top:849.80px;font-size:22.093px;line-height:22.093px;letter-spacing:1.105px;color:#fff;font-weight:normal;transform:scaleX(0.5721);text-shadow:0.70px 0 0 #fff,1.40px 0 0 #fff;">MÓDOSÍTÁS</span>
<span class="t" style="left:360.95px;top:902.80px;font-size:23.983px;line-height:23.983px;letter-spacing:1.199px;color:#d9141c;font-weight:normal;transform:scaleX(0.6151);text-shadow:0.49px 0 0 #d9141c;">00000027</span>
<span class="t" style="left:527.85px;top:902.80px;font-size:23.983px;line-height:23.983px;letter-spacing:1.199px;color:#111;font-weight:normal;transform:scaleX(0.5588);text-shadow:0.54px 0 0 #111,1.07px 0 0 #111;">2016-os szabadság</span>
<span class="t" style="left:557.00px;top:927.80px;font-size:23.983px;line-height:23.983px;letter-spacing:1.199px;color:#111;font-weight:normal;transform:scaleX(0.6184);text-shadow:0.49px 0 0 #111,0.97px 0 0 #111;">kimutatás</span>
<span class="t" style="left:748.55px;top:902.80px;font-size:23.983px;line-height:23.983px;letter-spacing:1.199px;color:#111;font-weight:normal;transform:scaleX(0.5530);text-shadow:0.54px 0 0 #111,1.09px 0 0 #111;">Jegyzőkönyv</span>
<span class="t" style="left:947.00px;top:902.80px;font-size:23.983px;line-height:23.983px;letter-spacing:1.199px;color:#111;font-weight:normal;transform:scaleX(0.5187);text-shadow:0.58px 0 0 #111,1.16px 0 0 #111;">BUDAPEST</span>
<span class="t" style="left:1108.85px;top:902.80px;font-size:23.983px;line-height:23.983px;letter-spacing:1.199px;color:#111;font-weight:normal;transform:scaleX(0.5593);text-shadow:0.54px 0 0 #111,1.07px 0 0 #111;">Összes felhasználó</span>
<span class="t" style="left:1291.95px;top:902.80px;font-size:23.983px;line-height:23.983px;letter-spacing:1.199px;color:#111;font-weight:normal;transform:scaleX(0.5465);text-shadow:0.55px 0 0 #111,1.10px 0 0 #111;">2016-10-03 09:55:10</span>
<span class="t" style="left:1541.55px;top:909.13px;font-size:16.860px;line-height:16.860px;letter-spacing:0.843px;color:#467bbb;font-weight:normal;transform:scaleX(0.6346);text-shadow:0.79px 0 0 #467bbb;">2D.jpg</span>
<span class="t" style="left:1545.35px;top:934.13px;font-size:16.860px;line-height:16.860px;letter-spacing:0.843px;color:#467bbb;font-weight:normal;transform:scaleX(0.6511);text-shadow:0.77px 0 0 #467bbb;">6.jpg</span>
<div class="r" style="left:1717px;top:903px;width:114px;height:42px;background:#efac4e;border-radius:6px"></div>
<span class="t" style="left:1733.30px;top:912.80px;font-size:22.093px;line-height:22.093px;letter-spacing:1.105px;color:#fff;font-weight:normal;transform:scaleX(0.5721);text-shadow:0.70px 0 0 #fff,1.40px 0 0 #fff;">MÓDOSÍTÁS</span>
<div class="r" style="left:0;top:966px;width:1920px;height:1px;background:#111"></div>
</body></html>
